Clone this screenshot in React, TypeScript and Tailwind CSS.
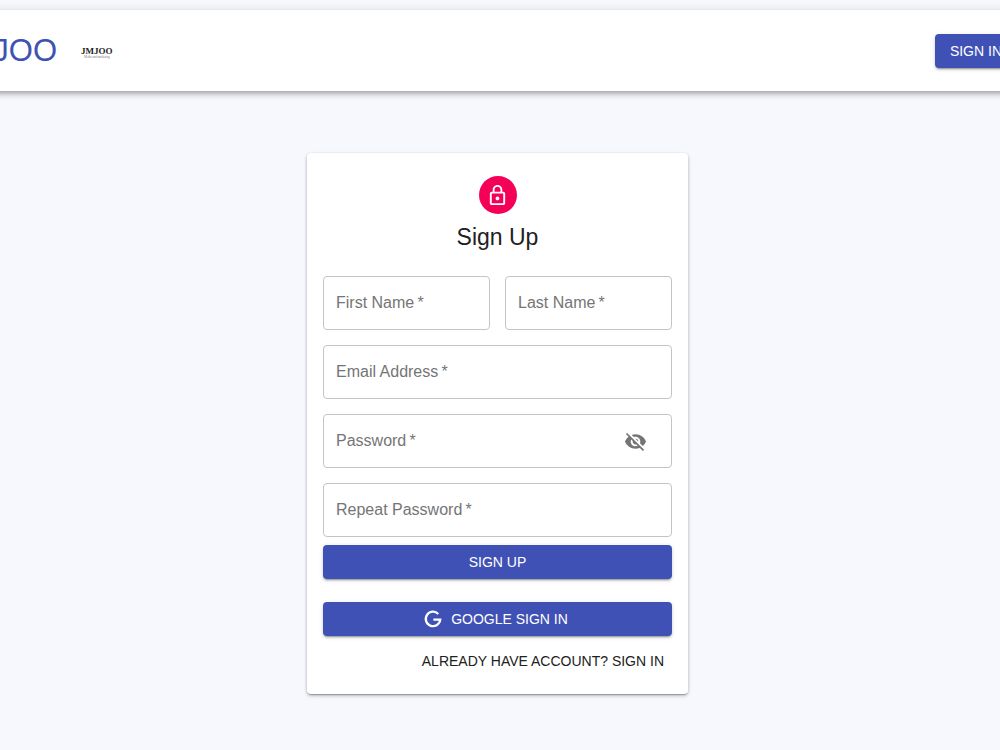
import { useState } from 'react';
import type { ReactNode } from 'react';

interface FieldProps {
  id: string;
  label: string;
  type?: string;
  children?: ReactNode;
}

function Field({ id, label, type = 'text', children }: FieldProps) {
  return (
    <div className="relative flex h-[54px] items-center rounded border border-[#c4c4c4] focus-within:border-[#3f51b5]">
      <input
        id={id}
        name={id}
        type={type}
        required
        placeholder=" "
        className="peer h-full w-full min-w-0 bg-transparent px-3 text-base text-[#212121] outline-none"
      />
      <label
        htmlFor={id}
        className="pointer-events-none absolute -top-2 left-2 bg-white px-1 text-xs leading-4 text-[#757575] peer-placeholder-shown:top-3.5 peer-placeholder-shown:text-base peer-placeholder-shown:leading-6 peer-focus:-top-2 peer-focus:text-xs peer-focus:leading-4 peer-focus:text-[#3f51b5]"
      >
        {label}&thinsp;*
      </label>
      {children}
    </div>
  );
}

function LockIcon() {
  return (
    <svg viewBox="0 0 24 24" className="size-[23px]" fill="currentColor" aria-hidden="true">
      <path d="M12 17c1.1 0 2-.9 2-2s-.9-2-2-2-2 .9-2 2 .9 2 2 2zm6-9h-1V6c0-2.76-2.24-5-5-5S7 3.24 7 6v2H6c-1.1 0-2 .9-2 2v10c0 1.1.9 2 2 2h12c1.1 0 2-.9 2-2V10c0-1.1-.9-2-2-2zM8.9 6c0-1.71 1.39-3.1 3.1-3.1s3.1 1.39 3.1 3.1v2H8.9V6zM18 20H6V10h12v10z" />
    </svg>
  );
}

function EyeOffIcon() {
  return (
    <svg viewBox="0 0 24 24" className="size-[23px]" fill="currentColor" aria-hidden="true">
      <path d="M12 7c2.76 0 5 2.24 5 5 0 .65-.13 1.26-.36 1.83l2.92 2.92c1.51-1.26 2.7-2.89 3.43-4.75-1.73-4.39-6-7.5-11-7.5-1.4 0-2.74.25-3.98.7l2.16 2.16C10.74 7.13 11.35 7 12 7zM2 4.27l2.28 2.28.46.46C3.08 8.3 1.78 10.02 1 12c1.73 4.39 6 7.5 11 7.5 1.55 0 3.03-.3 4.38-.84l.42.42L19.73 22 21 20.73 3.27 3 2 4.27zM7.53 9.8l1.55 1.55c-.05.21-.08.43-.08.65 0 1.66 1.34 3 3 3 .22 0 .44-.03.65-.08l1.55 1.55c-.67.33-1.41.53-2.2.53-2.76 0-5-2.24-5-5 0-.79.2-1.53.53-2.2zm4.31-.78l3.15 3.15.02-.16c0-1.66-1.34-3-3-3l-.17.01z" />
    </svg>
  );
}

function GoogleIcon() {
  return (
    <svg viewBox="0 0 24 24" className="-ml-1 size-5" fill="none" stroke="currentColor" strokeWidth="2.7" aria-hidden="true">
      <path d="M18.3 5.9A8.7 8.7 0 1 0 20.7 12.6H12.4" />
    </svg>
  );
}

const buttonClass =
  'flex h-[34px] items-center justify-center rounded bg-[#3f51b5] px-[15px] text-sm text-white uppercase shadow-[0_3px_1px_-2px_rgba(0,0,0,0.2),0_2px_2px_0_rgba(0,0,0,0.14),0_1px_5px_0_rgba(0,0,0,0.12)] hover:bg-[#303f9f]';

function Header() {
  return (
    <header className="-mx-16 flex h-[81px] items-center justify-between bg-white pr-[47px] pl-4 shadow-[0_2px_4px_-1px_rgba(0,0,0,0.2),0_4px_5px_0_rgba(0,0,0,0.14),0_1px_10px_0_rgba(0,0,0,0.12)]">
      <a href="#" className="flex items-center gap-6">
        <span className="text-[31px] leading-10 text-[#3f51b5]">JMJOO</span>
        <span className="flex flex-col items-center pt-1 font-['Liberation_Serif',serif] text-[#222]">
          <span className="text-[9px] leading-[9px] font-bold">JMJOO</span>
          <span className="text-[3px] leading-[3px] text-[#777]">Media and marketing</span>
        </span>
      </a>
      <button type="button" className={buttonClass}>
        Sign In
      </button>
    </header>
  );
}

export default function App() {
  const [showPassword, setShowPassword] = useState(false);

  return (
    <div className="min-h-screen overflow-x-hidden bg-[#f6f8fd] pt-2.5 font-['Liberation_Sans',Arial,sans-serif]">
      <Header />
      <main className="pt-[62px] pr-[5px] pb-14">
        <section className="mx-auto max-w-[381px] rounded bg-white px-4 pt-[23px] pb-4 shadow-[0_2px_1px_-1px_rgba(0,0,0,0.2),0_1px_3px_0_rgba(0,0,0,0.2),0_2px_4px_0_rgba(0,0,0,0.14)]">
          <div className="flex flex-col items-center gap-2">
            <div className="flex size-[38px] items-center justify-center rounded-full bg-[#f50057] text-white">
              <LockIcon />
            </div>
            <h1 className="text-[23px] leading-[30px] text-[#212121]">Sign Up</h1>
          </div>

          <form className="mt-6" onSubmit={(e) => e.preventDefault()}>
            <div className="flex flex-col gap-[15px]">
              <div className="grid grid-cols-2 gap-[15px]">
                <Field id="firstName" label="First Name" />
                <Field id="lastName" label="Last Name" />
              </div>
              <Field id="email" label="Email Address" type="email" />
              <Field id="password" label="Password" type={showPassword ? 'text' : 'password'}>
                <button
                  type="button"
                  aria-label="Toggle password visibility"
                  onClick={() => setShowPassword(!showPassword)}
                  className="mr-3 flex size-12 shrink-0 items-center justify-center rounded-full text-[#757575]"
                >
                  <EyeOffIcon />
                </button>
              </Field>
              <Field id="confirmPassword" label="Repeat Password" type="password" />
            </div>

            <button type="submit" className={`${buttonClass} mt-2 w-full`}>
              Sign Up
            </button>
            <button type="button" className={`${buttonClass} mt-[23px] w-full gap-2`}>
              <GoogleIcon />
              Google Sign In
            </button>
            <div className="mt-2 flex justify-end">
              <button type="button" className="h-[34px] rounded px-2 text-sm text-[#212121] uppercase">
                Already have account? Sign In
              </button>
            </div>
          </form>
        </section>
      </main>
    </div>
  );
}
